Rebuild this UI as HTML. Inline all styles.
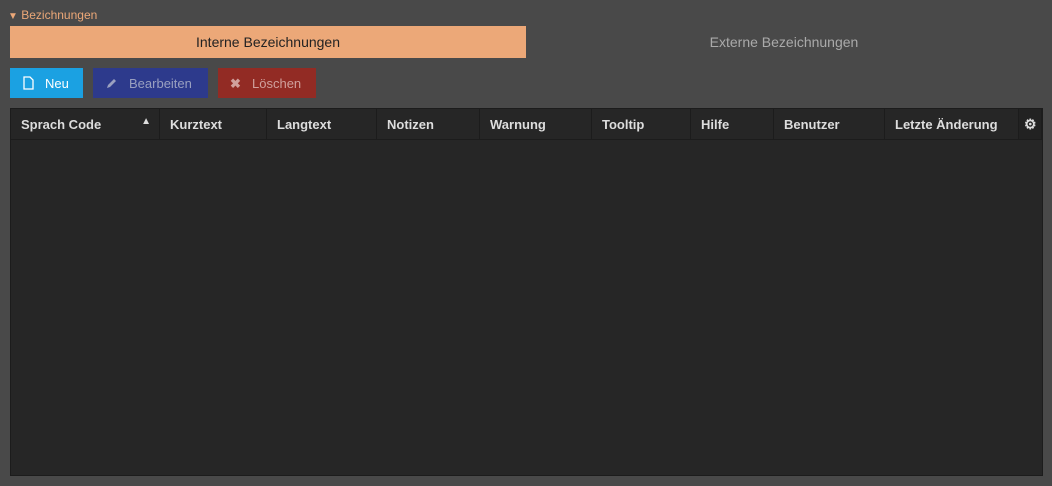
<!DOCTYPE html>
<html><head><meta charset="utf-8"><style>
body{margin:0;width:1052px;height:486px;background:#494949;font-family:"Liberation Sans",sans-serif;overflow:hidden;position:relative}
.a{position:absolute}
.title{left:8px;top:8px;font-size:12px;color:#eca878}
.tab1{left:10px;top:26px;width:516px;height:32px;background:#eca878;color:#222;font-size:14px;text-align:center;line-height:32px}
.tab2{left:526px;top:26px;width:516px;height:32px;color:#aaa;font-size:14px;text-align:center;line-height:32px}
.btn{top:68px;height:30px;line-height:31px;font-size:13px}
.tbl{left:10px;top:108px;width:1031px;height:366px;background:#262626;border:1px solid #1c1c1c}
.hd{position:absolute;top:0;height:31px;border-bottom:1px solid #1c1c1c;border-right:1px solid #1c1c1c;color:#ddd;font-weight:bold;font-size:13px;line-height:31px;padding-left:10px;box-sizing:border-box;background:#262626}
</style></head><body>
<div class="a title"><span style="font-size:10px">▼</span> Bezichnungen</div>
<div class="a tab1">Interne Bezeichnungen</div>
<div class="a tab2">Externe Bezeichnungen</div>
<div class="a btn" style="left:10px;width:73px;background:#1ba1e2;color:#fff"><svg class="a" style="left:13px;top:8px" width="11" height="14" viewBox="0 0 11 14"><path d="M1 1h6l3 3v9H1z" fill="none" stroke="#fff" stroke-width="1.3"/></svg><span class="a" style="left:35px">Neu</span></div>
<div class="a btn" style="left:93px;width:115px;background:#2d3a8c;color:#9aa0c0"><svg class="a" style="left:13px;top:9px" width="12" height="12" viewBox="0 0 12 12"><path d="M1 11l1-3 6-6 2 2-6 6z" fill="#9aa0c0"/></svg><span class="a" style="left:36px">Bearbeiten</span></div>
<div class="a btn" style="left:218px;width:98px;background:#922b24;color:#d0a09c"><span class="a" style="left:12px;font-weight:bold">✖</span><span class="a" style="left:34px">Löschen</span></div>
<div class="a tbl">
<div class="hd" style="left:0;width:149px">Sprach Code<span style="position:absolute;right:8px;top:-3px;font-size:10px">▲</span></div>
<div class="hd" style="left:149px;width:107px">Kurztext</div>
<div class="hd" style="left:256px;width:110px">Langtext</div>
<div class="hd" style="left:366px;width:103px">Notizen</div>
<div class="hd" style="left:469px;width:112px">Warnung</div>
<div class="hd" style="left:581px;width:99px">Tooltip</div>
<div class="hd" style="left:680px;width:83px">Hilfe</div>
<div class="hd" style="left:763px;width:111px">Benutzer</div>
<div class="hd" style="left:874px;width:134px">Letzte Änderung</div>
<div class="hd" style="left:1008px;width:23px;padding-left:5px;font-size:14px;background:#222">⚙</div>
</div>
</body></html>
